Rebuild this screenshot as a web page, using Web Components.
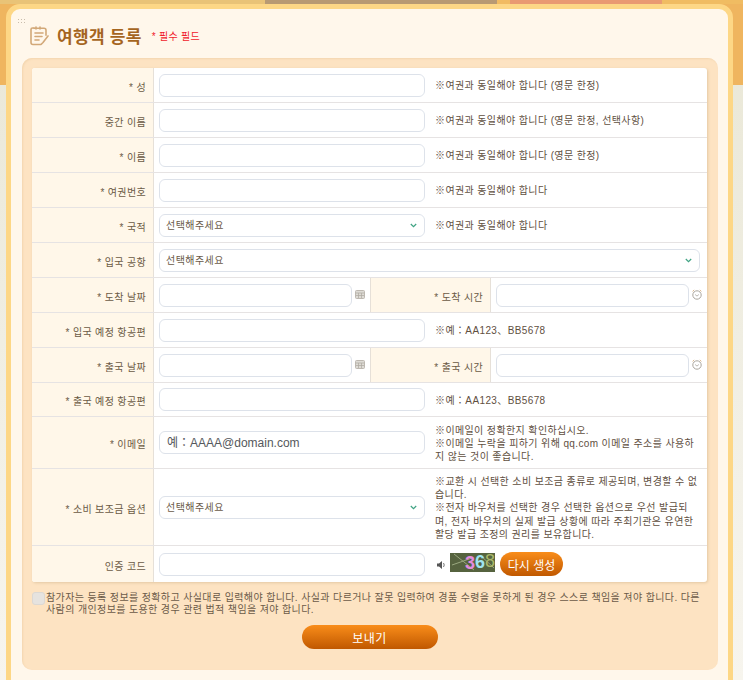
<!DOCTYPE html>
<html lang="ko">
<head>
<meta charset="utf-8">
<title>여행객 등록</title>
<style>
    html, body { margin: 0; height: 680px; overflow: hidden; }
    body { font-family: "Liberation Sans", "Noto Sans CJK KR", sans-serif; font-size: 10px; color: #5c4a38; }
</style>
</head>
<body>
<page-backdrop>
<register-card heading="여행객 등록" note="* 필수 필드">
    <form-row label="* 성"><text-box></text-box><field-hint>※여권과 동일해야 합니다 (영문 한정)</field-hint></form-row>
    <form-row label="중간 이름"><text-box></text-box><field-hint>※여권과 동일해야 합니다 (영문 한정, 선택사항)</field-hint></form-row>
    <form-row label="* 이름"><text-box></text-box><field-hint>※여권과 동일해야 합니다 (영문 한정)</field-hint></form-row>
    <form-row label="* 여권번호"><text-box></text-box><field-hint>※여권과 동일해야 합니다</field-hint></form-row>
    <form-row label="* 국적"><select-box>선택해주세요</select-box><field-hint>※여권과 동일해야 합니다</field-hint></form-row>
    <form-row label="* 입국 공항"><select-box wide>선택해주세요</select-box></form-row>
    <form-row label="* 도착 날짜" split="* 도착 시간">
        <text-box icon="calendar" short></text-box>
        <text-box slot="second" icon="clock" short></text-box>
    </form-row>
    <form-row label="* 입국 예정 항공편"><text-box></text-box><field-hint>※예：AA123、BB5678</field-hint></form-row>
    <form-row label="* 출국 날짜" split="* 출국 시간">
        <text-box icon="calendar" short></text-box>
        <text-box slot="second" icon="clock" short></text-box>
    </form-row>
    <form-row label="* 출국 예정 항공편" style="--h:34px"><text-box></text-box><field-hint>※예：AA123、BB5678</field-hint></form-row>
    <form-row label="* 이메일" style="--h:52px"><text-box><span>예：AAAA@domain.com</span></text-box><field-hint>※이메일이 정확한지 확인하십시오.<br>※이메일 누락을 피하기 위해 qq.com 이메일 주소를 사용하지 않는 것이 좋습니다.</field-hint></form-row>
    <form-row label="* 소비 보조금 옵션" style="--h:77px"><select-box>선택해주세요</select-box><field-hint>※교환 시 선택한 소비 보조금 종류로 제공되며, 변경할 수 없습니다.<br>※전자 바우처를 선택한 경우 선택한 옵션으로 우선 발급되며, 전자 바우처의 실제 발급 상황에 따라 주최기관은 유연한 할당 발급 조정의 권리를 보유합니다.</field-hint></form-row>
    <form-row label="인증 코드" style="--h:36px" last><text-box></text-box><captcha-code></captcha-code></form-row>
    <agree-check slot="after">참가자는 등록 정보를 정확하고 사실대로 입력해야 합니다. 사실과 다르거나 잘못 입력하여 경품 수령을 못하게 된 경우 스스로 책임을 져야 합니다. 다른 사람의 개인정보를 도용한 경우 관련 법적 책임을 져야 합니다.</agree-check>
    <pill-button slot="after" send>보내기</pill-button>
</register-card>
</page-backdrop>

<script>
const calendarIcon = `<svg width="10" height="9" viewBox="0 0 10 9"><rect x=".5" y=".5" width="9" height="8" rx="1" fill="#dedbd5" stroke="#bdb8b0"/><path d="M1 3h8M3.500 3v5M6.500 3v5M1 5.500h8" stroke="#aea9a0" stroke-width=".7"/></svg>`;
const clockIcon = `<svg width="10" height="11" viewBox="0 0 10 11" fill="none" stroke="#aaa59c"><circle cx="5" cy="6" r="4.200"/><path d="M3.100 5.500l1.900 1.600 1.900-1.600" stroke-width=".8"/><path d="M.6 2.400L2.200 1M9.400 2.400L7.800 1" stroke="#d8b48a"/></svg>`;

customElements.define('page-backdrop', class extends HTMLElement {
    constructor() {
        super();
        this.attachShadow({ mode: 'open' });
        this.shadowRoot.innerHTML = `
        <style>
            :host {
                display: block;
                height: 680px;
                overflow: hidden;
                box-sizing: border-box;
                padding: 4px 10px 0 6px;
                background:
                    linear-gradient(90deg, #e9c377 0 265px, #b89a73 265px 497px, #f1bb62 497px 510px, #e99a72 510px 662px, #f0bc62 662px) 0 0 / 100% 4px no-repeat,
                    linear-gradient(#efb55f, #efb55f) 0 0 / 100% 85px no-repeat,
                    linear-gradient(#e9e7d6, #f7f5ee);
            }
        </style>
        <slot></slot>
        `;
    }
});

customElements.define('register-card', class extends HTMLElement {
    constructor() {
        super();
        this.attachShadow({ mode: 'open' });
    }

    connectedCallback() {
        this.shadowRoot.innerHTML = `
        <style>
            :host {
                display: block;
                height: 720px;
                box-sizing: border-box;
                border: 5px solid #fdd786;
                border-radius: 14px;
                background: #fff7eb;
            }
            .head {
                position: relative;
                display: flex;
                align-items: center;
                height: 49px;
                box-sizing: border-box;
                padding: 4px 0 0 19px;
            }
            .dots {
                position: absolute;
                left: 6px;
                top: 9px;
                width: 8px;
                height: 6px;
                background: radial-gradient(circle, #c9bdac .7px, transparent 1px) 0 0 / 3px 3px;
            }
            svg { margin: 1px 8px 0 0; }
            h1 {
                margin: 0 10px 0 0;
                font-size: 17px;
                font-weight: 700;
                color: #a5651f;
                letter-spacing: .3px;
            }
            .note { color: #f01a2c; font-size: 10px; letter-spacing: .3px; }
            .panel {
                margin: 0 10px 0 11px;
                padding: 10px 11px 20px 10px;
                height: 612px;
                box-sizing: border-box;
                background: #fde3c2;
                border-radius: 10px;
                box-shadow: inset 1px 1px 2px #f3d6b0;
            }
            .table {
                background: #fff;
                border-radius: 3px;
                box-shadow: 1px 1px 3px #e3c8a4;
                overflow: hidden;
            }
        </style>
        <div class="head">
            <div class="dots"></div>
            <svg width="19" height="20" viewBox="0 0 19 20" fill="none" stroke="#d2a878" stroke-width="1.6" stroke-linecap="round" stroke-linejoin="round">
                <path d="M4 2H2.500Q1 2 1 3.500v13Q1 18.500 3 18.500h8"/>
                <path d="M6 1v2M10 1v2M4 2.200h10q2 0 2 2v5"/>
                <path d="M5 7h8M5 10.500h7M5 14h4"/>
                <path d="M18 10l-5 6.500-1.500 1.500"/>
            </svg>
            <h1>${this.getAttribute('heading')}</h1>
            <span class="note">${this.getAttribute('note')}</span>
        </div>
        <div class="panel">
            <div class="table"><slot></slot></div>
            <slot name="after"></slot>
        </div>
        `;
    }
});

customElements.define('form-row', class extends HTMLElement {
    constructor() {
        super();
        this.attachShadow({ mode: 'open' });
    }

    connectedCallback() {
        const split = this.getAttribute('split');
        this.shadowRoot.innerHTML = `
        <style>
            :host {
                display: grid;
                grid-template-columns: ${split ? '122px 216px 121px 1fr' : '122px 1fr'};
                min-height: var(--h, 35px);
                box-sizing: border-box;
                border-bottom: 1px solid #e6e3e3;
            }
            :host([last]) { border-bottom: 0; }
            .label {
                display: flex;
                align-items: center;
                justify-content: flex-end;
                padding: 2px 7px 0 0;
                background: #fff7e9;
                border-right: 1px solid #e6e0d8;
                color: #6b5a45;
                letter-spacing: .35px;
            }
            .cell {
                display: flex;
                align-items: center;
                gap: 10px;
                padding: 0 0 0 5px;
                min-width: 0;
            }
            .mid { border-left: 1px solid #e6e0d8; }
        </style>
        <div class="label">${this.getAttribute('label')}</div>
        <div class="cell"><slot></slot></div>
        ${split ? `<div class="label mid">${split}</div><div class="cell"><slot name="second"></slot></div>` : ''}
        `;
    }
});

customElements.define('text-box', class extends HTMLElement {
    constructor() {
        super();
        this.attachShadow({ mode: 'open' });
    }

    connectedCallback() {
        const icon = this.getAttribute('icon');
        const glyph = icon === 'calendar' ? calendarIcon : icon === 'clock' ? clockIcon : '';
        this.shadowRoot.innerHTML = `
        <style>
            :host {
                display: flex;
                align-items: center;
                flex: none;
                gap: 3px;
                font-size: 12px;
                color: #55585c;
            }
            .wrap { position: relative; display: flex; align-items: center; }
            input {
                width: 266px;
                height: 23px;
                box-sizing: border-box;
                border: 1px solid #dde2ea;
                border-radius: 6px;
                background: #fff;
                padding: 0 8px;
                margin: 0;
            }
            :host([short]) input { width: 193px; }
            .hint { position: absolute; left: 8px; top: 2px; pointer-events: none; }
            svg { display: block; margin-top: -2px; }
        </style>
        <div class="wrap"><input type="text"><div class="hint"><slot></slot></div></div>
        ${glyph}
        `;
    }
});

customElements.define('select-box', class extends HTMLElement {
    constructor() {
        super();
        this.attachShadow({ mode: 'open' });
    }

    connectedCallback() {
        this.shadowRoot.innerHTML = `
        <style>
            :host {
                display: flex;
                align-items: center;
                justify-content: space-between;
                flex: none;
                width: 266px;
                height: 23px;
                box-sizing: border-box;
                border: 1px solid #dde2ea;
                border-radius: 6px;
                background: #fff;
                padding: 0 7px 0 6px;
                color: #6a5a48;
                letter-spacing: .45px;
            }
            :host([wide]) { width: 541px; }
            span { margin-top: -2px; }
        </style>
        <span><slot></slot></span>
        <svg width="7" height="5" viewBox="0 0 7 5" fill="none" stroke="#3fa383" stroke-width="1.200"><path d="M.8 1l2.700 2.700L6.200 1"/></svg>
        `;
    }
});

customElements.define('field-hint', class extends HTMLElement {
    constructor() {
        super();
        this.attachShadow({ mode: 'open' });
        this.shadowRoot.innerHTML = `
        <style>
            :host {
                display: block;
                width: 265px;
                padding-top: 2px;
                line-height: 13.3px;
                letter-spacing: .38px;
                color: #5f4f3f;
                word-break: break-all;
            }
        </style>
        <slot></slot>
        `;
    }
});

customElements.define('captcha-code', class extends HTMLElement {
    constructor() {
        super();
        this.attachShadow({ mode: 'open' });
        this.shadowRoot.innerHTML = `
        <style>
            :host { display: flex; align-items: center; gap: 4px; margin-left: 2px; }
            svg { display: block; }
            .speaker { margin-top: 1px; }
            .img {
                position: relative;
                display: flex;
                justify-content: flex-end;
                align-items: center;
                width: 45px;
                height: 19px;
                margin: -4px 1px 0 0;
                box-sizing: border-box;
                background: #56633f;
                font: 700 18px/17px "Liberation Sans", sans-serif;
            }
            .img svg { position: absolute; left: 0; top: 0; }
            .img span { position: relative; }
            .low { color: #e58be0; margin-top: 2px; }
            .cyan { color: #9fe3f0; }
            .olive { color: #aab86a; font-weight: 400; margin-top: -1px; }
        </style>
        <svg class="speaker" width="9" height="8" viewBox="0 0 9 8"><path d="M0 2.500h2L5 0v8L2 5.500H0z" fill="#555"/><path d="M6.500 2q1.500 2 0 4" stroke="#777" fill="none"/></svg>
        <div class="img">
            <svg width="45" height="19" viewBox="0 0 45 19"><path d="M4 1L24 17M2 12L22 5M30 2L44 15" stroke="#9aa87f" stroke-width="1" fill="none"/></svg>
            <span class="low">3</span>
            <span class="cyan">6</span>
            <span class="olive">8</span>
        </div>
        <pill-button>다시 생성</pill-button>
        `;
    }
});

customElements.define('pill-button', class extends HTMLElement {
    constructor() {
        super();
        this.attachShadow({ mode: 'open' });
        this.shadowRoot.innerHTML = `
        <style>
            :host {
                display: flex;
                align-items: center;
                justify-content: center;
                width: 63px;
                height: 24px;
                border-radius: 12px;
                background: linear-gradient(#f98d1a, #c05800);
                color: #fff;
                font-size: 12px;
                cursor: pointer;
            }
            :host([send]) {
                width: 136px;
                margin: 10px auto 0;
                letter-spacing: .5px;
            }
        </style>
        <slot></slot>
        `;
    }
});

customElements.define('agree-check', class extends HTMLElement {
    constructor() {
        super();
        this.attachShadow({ mode: 'open' });
        this.shadowRoot.innerHTML = `
        <style>
            :host {
                display: flex;
                margin-top: 9px;
                line-height: 12px;
                letter-spacing: .38px;
                color: #6b5a48;
            }
            .box {
                flex: none;
                width: 13px;
                height: 13px;
                margin: 1px 1px 0 0;
                box-sizing: border-box;
                border: 1px solid #dcd8d3;
                border-radius: 3px;
                background: #e6e3df;
            }
            .text { padding-top: 1px; height: 23px; }
        </style>
        <div class="box"></div>
        <div class="text"><slot></slot></div>
        `;
    }
});
</script>
</body>
</html>
